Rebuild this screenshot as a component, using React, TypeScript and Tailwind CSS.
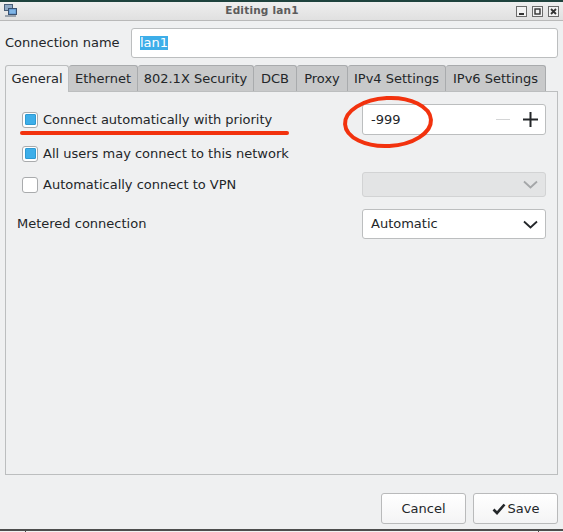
import React from "react";

const font = { fontFamily: '"DejaVu Sans", "Noto Sans", sans-serif' };

function Checkbox({ checked }: { checked?: boolean }) {
  return (
    <span className="flex h-[16px] w-[16px] shrink-0 items-center justify-center rounded-[3px] border border-[#a9abad] bg-white">
      {checked && <span className="h-[11px] w-[11px] rounded-[1px] border border-[#2e9ad2] bg-[#3daee9]" />}
    </span>
  );
}

function Chevron({ color }: { color: string }) {
  return (
    <svg width="15" height="9" viewBox="0 0 15 9" fill="none">
      <path d="M1 1.5 L7.5 7.5 L14 1.5" stroke={color} strokeWidth="1.8" />
    </svg>
  );
}

function WinButton({ kind }: { kind: "min" | "max" | "close" }) {
  return (
    <span className="flex h-[11px] w-[11px] items-center justify-center border border-[#6b6b6b] bg-[#f2f2f2]">
      <svg width="9" height="9" viewBox="0 0 9 9">
        {kind === "min" && <rect x="2" y="6" width="5" height="2" fill="#333" />}
        {kind === "max" && <rect x="2" y="2" width="5" height="5" fill="none" stroke="#333" strokeWidth="1.4" />}
        {kind === "close" && (
          <path d="M2 2 L7 7 M7 2 L2 7" stroke="#333" strokeWidth="1.8" />
        )}
      </svg>
    </span>
  );
}

// tab label + fixed width, measured from the screenshot
const tabs: [string, string][] = [
  ["General", "w-[64px]"],
  ["Ethernet", "w-[69px]"],
  ["802.1X Security", "w-[116px]"],
  ["DCB", "w-[43px]"],
  ["Proxy", "w-[51px]"],
  ["IPv4 Settings", "w-[98px]"],
  ["IPv6 Settings", "w-[100px]"],
];

export default function App() {
  return (
    <div className="flex h-[532px] w-[563px] flex-col overflow-hidden bg-[#eff0f1] text-[13px] text-[#232629]" style={font}>
      <div className="h-[2px] bg-[#1f433e]" />

      {/* title bar */}
      <div className="relative flex h-[19px] items-center border-b border-[#b9b9b9] bg-gradient-to-b from-[#efefef] to-[#e0e0e0] px-[4px]">
        <svg width="13" height="14" viewBox="0 0 13 14">
          <rect x="0.5" y="0.5" width="8" height="6" fill="#8fa9c4" stroke="#4a5f78" />
          <rect x="4.5" y="4.5" width="8" height="6" fill="#5d8fc8" stroke="#3b5270" />
          <rect x="5.5" y="5.5" width="6" height="4" fill="#7fb5e6" />
          <rect x="1" y="11" width="11" height="2" fill="#9aa3ad" />
        </svg>
        <span className="absolute left-0 w-[524px] text-center text-[10.5px] font-bold tracking-[0.2px] text-[#5c5c5c]">Editing lan1</span>
        <div className="ml-auto flex gap-[5px]">
          <WinButton kind="min" />
          <WinButton kind="max" />
          <WinButton kind="close" />
        </div>
      </div>

      {/* body */}
      <div className="flex flex-1 flex-col px-[5px] pt-[7px]">
        <div className="flex items-center">
          <span className="w-[126px]">Connection name</span>
          <div className="flex h-[30px] flex-1 items-center rounded-[3px] border border-[#bcbebf] bg-white px-[8px]">
            <span className="bg-[#3daee9] leading-[14px] text-white">lan1</span>
          </div>
        </div>

        <div className="mt-[7px] flex h-[26px] items-stretch">
          {tabs.map(([t, w], i) =>
            i === 0 ? (
              <div key={t} className={`relative z-10 -mb-px flex items-center justify-center rounded-t-[3px] border border-b-0 border-[#bcbebf] bg-[#eff0f1] ${w}`}>
                {t}
              </div>
            ) : (
              <div key={t} className={`flex items-center justify-center rounded-t-[3px] border border-l-0 border-b-0 border-[#a9abad] bg-[#c8c9ca] ${w}`}>
                {t}
              </div>
            )
          )}
        </div>

        {/* panel */}
        <div className="relative flex-1 border border-[#bcbebf] pr-[11px]">
          <div className="mt-[12px] flex h-[31px] items-center justify-between pl-[16px]">
            <div className="flex items-center gap-[5px]">
              <Checkbox checked />
              <span>Connect automatically with priority</span>
            </div>
            <div className="flex h-[31px] w-[184px] items-center rounded-[3px] border border-[#bcbebf] bg-white pl-[8px] pr-[7px]">
              <span>-999</span>
              <span className="ml-auto mr-[13px] h-[1.5px] w-[14px] bg-[#d4d5d6]" />
              <svg width="15" height="15" viewBox="0 0 15 15">
                <path d="M7.5 0 V15 M0 7.5 H15" stroke="#232629" strokeWidth="2" />
              </svg>
            </div>
          </div>

          <div className="mt-[7px] flex h-[23px] items-center gap-[5px] pl-[16px]">
            <Checkbox checked />
            <span>All users may connect to this network</span>
          </div>

          <div className="mt-[7px] flex h-[25px] items-center justify-between pl-[16px]">
            <div className="flex items-center gap-[5px]">
              <Checkbox />
              <span>Automatically connect to VPN</span>
            </div>
            <div className="flex h-[25px] w-[184px] items-center justify-end rounded-[3px] border border-[#d2d3d4] bg-[#e3e4e5] pr-[7px]">
              <Chevron color="#a4a6a8" />
            </div>
          </div>

          <div className="mt-[12px] flex h-[30px] items-center justify-between pl-[11px]">
            <span>Metered connection</span>
            <div className="flex h-[30px] w-[184px] items-center justify-between rounded-[3px] border border-[#bcbebf] bg-white pl-[8px] pr-[7px]">
              <span>Automatic</span>
              <Chevron color="#232629" />
            </div>
          </div>

          {/* annotations */}
          <div className="absolute left-[14px] top-[39px] h-[3.5px] w-[269px] rounded-full bg-[#f2320e]" />
          <svg className="absolute left-[336px] top-[3px]" width="92" height="54" viewBox="0 0 92 54" fill="none">
            <ellipse cx="46" cy="27" rx="43" ry="24" stroke="#f2320e" strokeWidth="4" transform="rotate(-3 46 27)" />
          </svg>
        </div>

        <div className="mt-[18px] flex justify-end gap-[7px]">
          <button className="flex h-[31px] w-[85px] items-center justify-center rounded-[3px] border border-[#b9babb] bg-gradient-to-b from-white to-[#f4f4f5]">
            Cancel
          </button>
          <button className="flex h-[31px] w-[85px] items-center justify-center gap-[2px] rounded-[3px] border border-[#b9babb] bg-gradient-to-b from-white to-[#f4f4f5]">
            <svg width="14" height="12" viewBox="0 0 14 12">
              <path d="M1.5 6.5 L5 10 L12.5 1.5" stroke="#232629" strokeWidth="2.6" fill="none" />
            </svg>
            Save
          </button>
        </div>
        <div className="h-[5px]" />
      </div>

      <div className="relative h-[3px] border-t-2 border-[#4d4d4d] bg-[#f2f2f2]">
        <span className="absolute left-[25px] top-0 h-[2px] w-px bg-[#4d4d4d]" />
        <span className="absolute left-[538px] top-0 h-[2px] w-px bg-[#4d4d4d]" />
      </div>
    </div>
  );
}
